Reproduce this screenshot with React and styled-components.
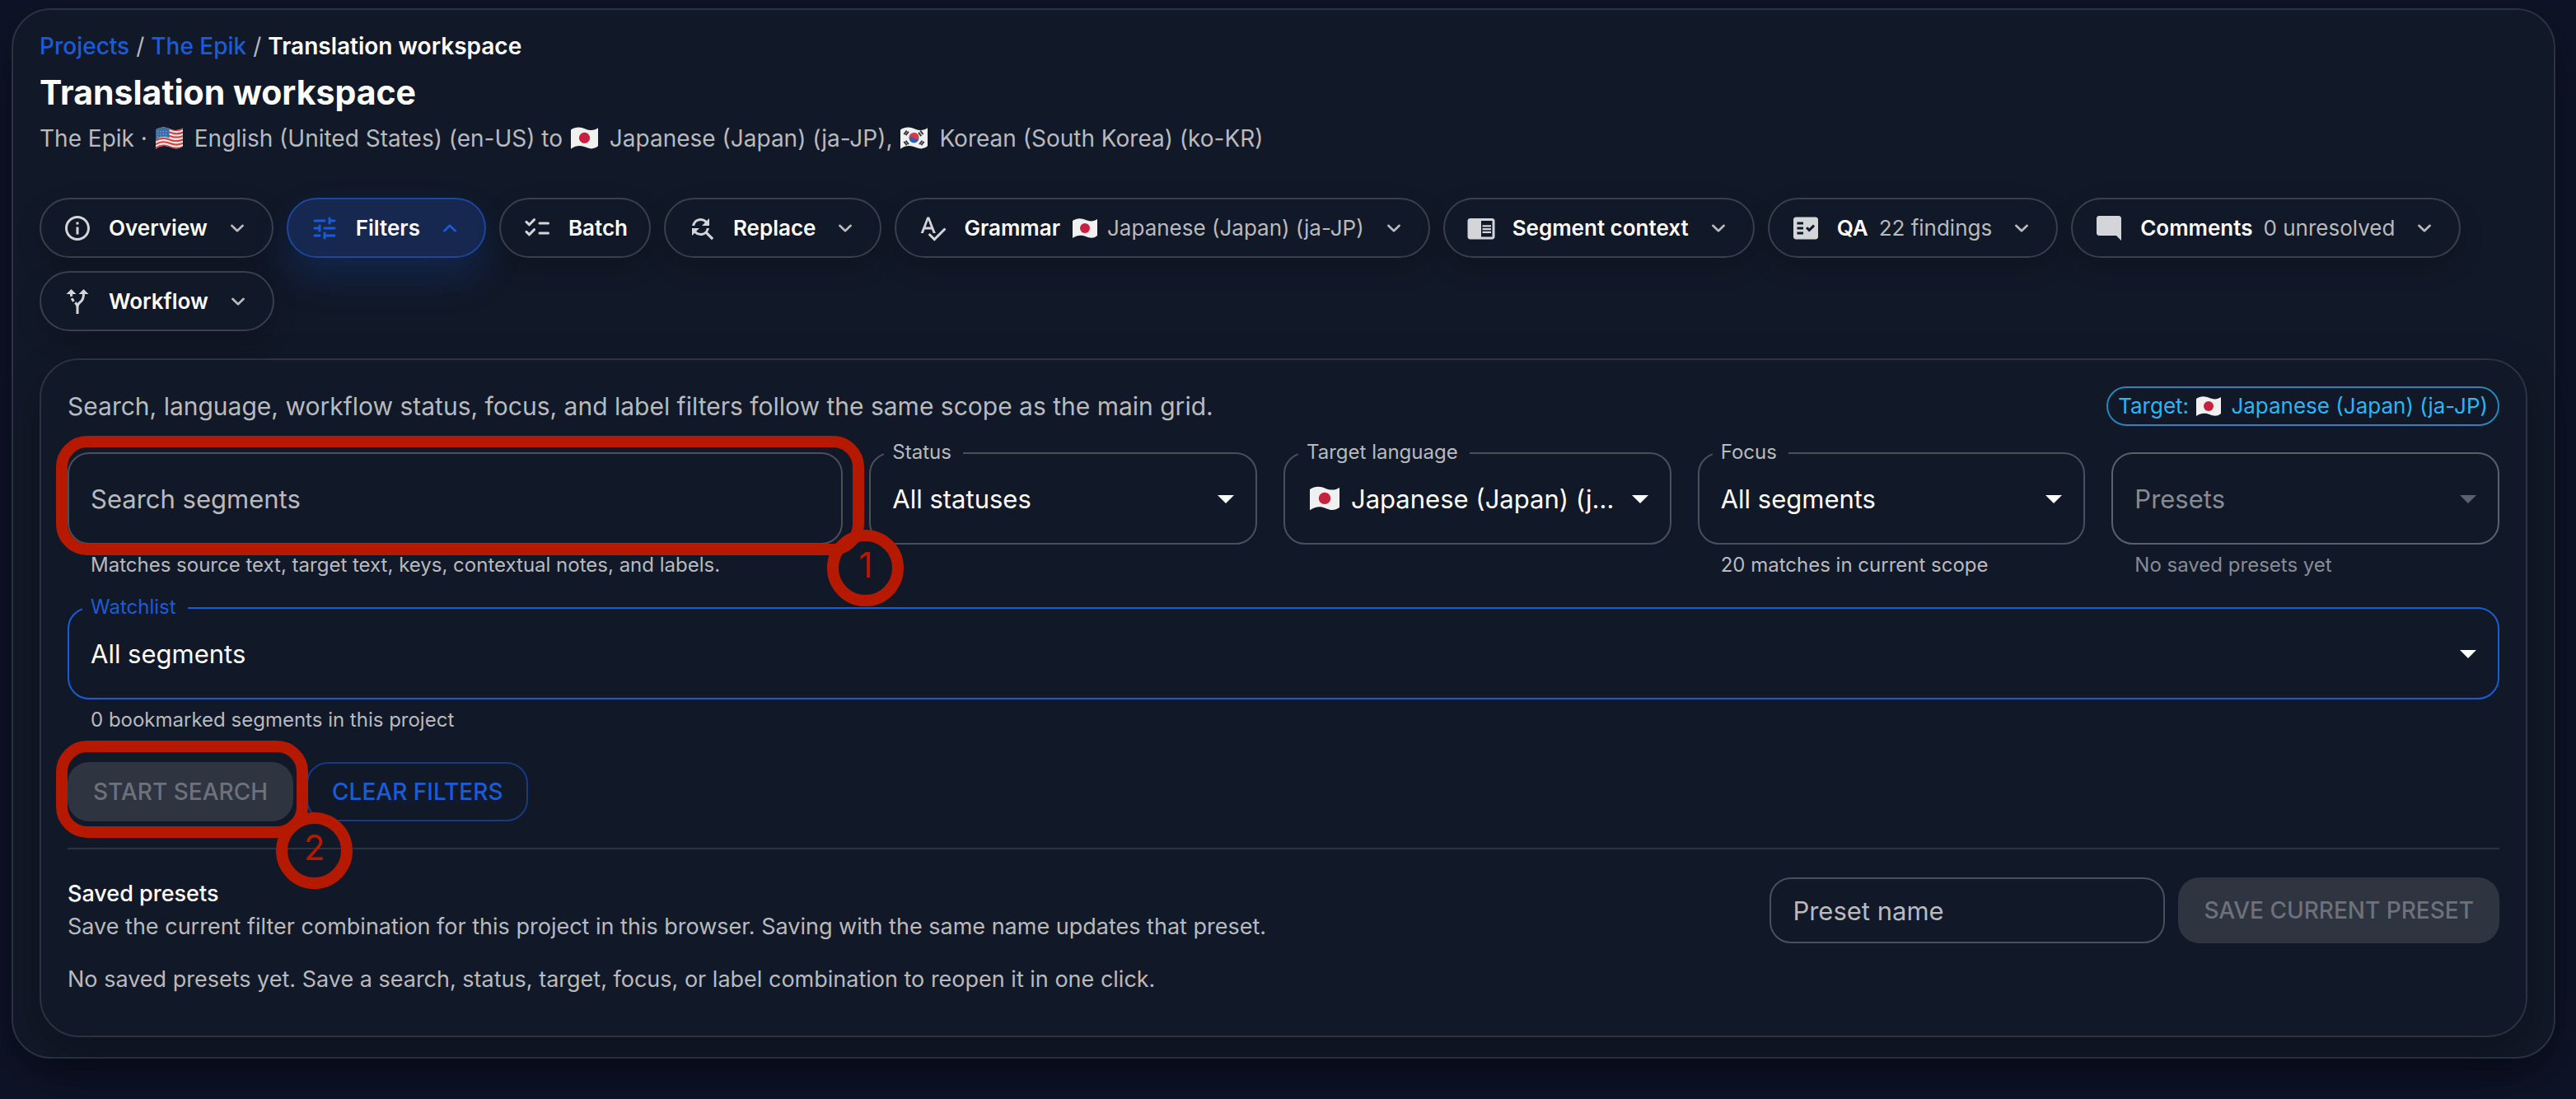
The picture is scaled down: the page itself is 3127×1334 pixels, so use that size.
import React, {useState} from 'react';
import styled, {createGlobalStyle, css} from 'styled-components';
import {
    MdInfoOutline, MdFindReplace, MdSpellcheck, MdChromeReaderMode,
    MdFactCheck, MdModeComment, MdAltRoute, MdArrowDropDown
} from 'react-icons/md';

const color = {
    paper: '#111827',
    blue: '#1a5cd6',
    sky: '#29b6f6',
    white: '#ffffff',
    muted: '#b8babe',
    icon: '#d3d5d9',
    faint: '#888b93',
    disabled: '#6d717b',
    line: '#2c323f',
    field: '#4a4f5a',
    fill: '#2e3440',
    red: '#b51a00',
};

const GlobalStyle = createGlobalStyle`
    * {
        box-sizing: border-box;
    }
    body {
        margin: 0;
        min-height: 100vh;
        background: #0e1327;
        color: ${color.white};
        font-family: Inter, "Liberation Sans", sans-serif;
        font-size: 28px;
        line-height: 40px;
    }
    button, input, select {
        font-family: inherit;
    }
`;

const Page = styled.div`
    padding: 10px 25px 48px 14px;
`;

const Card = styled.main`
    padding: 26px 32px 24px;
    background: ${color.paper};
    border: 2px solid ${color.line};
    border-radius: 48px;
    box-shadow: 0 20px 52px rgba(0, 0, 0, 0.36);
`;

const Crumbs = styled.nav`
    display: flex;
    gap: 8px;
    line-height: 36px;
    color: ${color.muted};
`;

const CrumbLink = styled.a`
    color: ${color.blue};
    font-weight: 500;
    text-decoration: none;
`;

const CrumbHere = styled.span`
    color: ${color.white};
    font-weight: 600;
`;

const Title = styled.h1`
    margin: 12px 0 10px;
    font-size: 41px;
    line-height: 52px;
    font-weight: 700;
`;

const Subtitle = styled.p`
    margin: 0;
    color: ${color.muted};
`;

const FlagSvg = styled.svg`
    display: inline-block;
    width: ${(p) => p.$width}px;
    height: ${(p) => p.$width - 3}px;
    margin: 0 ${(p) => (p.$width > 30 ? 14 : 12)}px 0 2px;
    vertical-align: -5px;
`;

const Toolbar = styled.div`
    display: flex;
    flex-wrap: wrap;
    gap: 16px;
    margin: 52px 0 33px;
`;

const ToolButton = styled.button`
    display: flex;
    align-items: center;
    gap: 20px;
    height: 73px;
    padding: 0 26px;
    background: ${color.paper};
    border: 2px solid #3a3f4b;
    border-radius: 37px;
    box-shadow: 0 12px 32px rgba(0, 0, 0, 0.16);
    color: ${color.white};
    font-size: 26px;
    font-weight: 600;
    white-space: nowrap;
    cursor: pointer;

    > svg {
        color: ${color.icon};
    }
    > svg:last-child {
        color: ${color.muted};
    }
    ${(p) => p.$active && css`
        background: #162750;
        border-color: #1b479d;
        box-shadow: 0 24px 48px rgba(26, 92, 214, 0.2);

        > svg, > svg:last-child {
            color: ${color.blue};
        }
    `}
`;

const ToolText = styled.span`
    display: flex;
    align-items: center;
    gap: 13px;
`;

const ToolNote = styled.span`
    color: ${color.muted};
    font-weight: 400;
`;

const Panel = styled.section`
    padding: 32px 32px 48px;
    background: ${color.paper};
    border: 2px solid ${color.line};
    border-radius: 48px;
    box-shadow: 0 16px 48px rgba(0, 0, 0, 0.24);
`;

const PanelHead = styled.div`
    display: flex;
    justify-content: space-between;
    align-items: center;
    margin-bottom: 32px;
    color: ${color.muted};
    font-size: 30px;
    line-height: 48px;
`;

const Chip = styled.span`
    height: 48px;
    padding: 0 12px;
    border: 2px solid #2387bb;
    border-radius: 24px;
    color: ${color.sky};
    font-size: 26px;
    line-height: 44px;
`;

const Fields = styled.div`
    display: grid;
    grid-template-columns: 2fr repeat(4, 1fr);
    gap: 32px;
`;

const FieldCell = styled.div`
    min-width: 0;
    ${(p) => p.$wide && 'grid-column: 1 / -1;'}
`;

const FieldBox = styled.div`
    position: relative;
    display: flex;
    align-items: center;
    height: 112px;
    border: 2px solid ${(p) => (p.$focused ? color.blue : p.$off ? '#5b606a' : color.field)};
    border-radius: 26px;
    color: ${(p) => (p.$off ? '#5b606a' : color.white)};
`;

const FieldLabel = styled.label`
    position: absolute;
    top: -18px;
    left: 16px;
    padding: 0 14px 0 10px;
    background: ${color.paper};
    color: ${(p) => (p.$focused ? color.blue : color.muted)};
    font-size: 24px;
    line-height: 32px;
`;

const ValueFlag = styled.span`
    display: flex;
    padding-left: 28px;
    margin-right: -26px;
`;

const Select = styled.select`
    flex: 1;
    min-width: 0;
    height: 100%;
    padding: 0 64px 0 26px;
    background: transparent;
    border: 0;
    outline: 0;
    appearance: none;
    color: ${(p) => (p.disabled ? color.faint : color.white)};
    opacity: 1;
    font-size: 31px;
    text-overflow: ellipsis;
`;

const DropArrow = styled(MdArrowDropDown)`
    position: absolute;
    right: 12px;
    width: 48px;
    height: 48px;
    pointer-events: none;
`;

const Input = styled.input`
    width: 100%;
    height: 100%;
    padding: 0 26px;
    background: transparent;
    border: 0;
    outline: 0;
    color: ${color.white};
    font-size: 31px;

    &::placeholder {
        color: ${color.muted};
        opacity: 1;
    }
`;

const Helper = styled.p`
    margin: 6px 28px 0;
    color: ${(p) => (p.$off ? color.faint : color.muted)};
    font-size: 24px;
    line-height: 38px;
`;

const Marker = styled.div`
    position: absolute;
    z-index: 1;
    inset: ${(p) => p.$inset};
    border: 14px solid ${color.red};
    border-radius: 38px;
    pointer-events: none;
`;

const MarkerNumber = styled.span`
    position: absolute;
    right: ${(p) => p.$right}px;
    bottom: -76px;
    width: 93px;
    height: 93px;
    border: 14px solid ${color.red};
    border-radius: 50%;
    color: ${color.red};
    font-size: 42px;
    font-weight: 400;
    line-height: 58px;
    text-align: center;
`;

const Actions = styled.div`
    display: flex;
    gap: 16px;
    margin: 32px 0;
`;

const ActionSlot = styled.div`
    position: relative;
`;

const Action = styled.button`
    height: ${(p) => (p.$tall ? 80 : 72)}px;
    padding: 0 ${(p) => (p.$outlined ? 29 : 31)}px;
    background: ${(p) => (p.$outlined ? 'transparent' : color.fill)};
    border: ${(p) => (p.$outlined ? '2px solid #173a80' : '0')};
    border-radius: 26px;
    color: ${(p) => (p.$outlined ? color.blue : color.disabled)};
    font-size: 28px;
    font-weight: 500;
    text-transform: uppercase;
    white-space: nowrap;
`;

const Saved = styled.div`
    display: flex;
    justify-content: space-between;
    align-items: center;
    gap: 16px;
    padding-top: 34px;
    border-top: 2px solid ${color.line};
`;

const SavedTitle = styled.h2`
    margin: 0;
    font-size: 27px;
    line-height: 40px;
    font-weight: 500;
`;

const Text = styled.p`
    margin: ${(p) => (p.$spaced ? '24px 0 0' : '0')};
    color: ${color.muted};
    font-size: 27px;
    line-height: 40px;
`;

const PresetForm = styled.div`
    display: flex;
    gap: 16px;
`;

const PresetBox = styled.div`
    width: 480px;
    height: 80px;
    border: 2px solid ${color.field};
    border-radius: 26px;
`;

// rounded line icons, drawn on a 24 unit grid
const LineIcon = ({size, d}) => (
    <svg width={size} height={size} viewBox="0 0 24 24" fill="none" stroke="currentColor" strokeWidth="2"
         strokeLinecap="round" strokeLinejoin="round" aria-hidden="true">
        <path d={d}/>
    </svg>
);

const TuneIcon = ({size}) => (
    <LineIcon size={size} d="M4 6h8M16 6h4M16 4v4M4 12h4M8 10v4M12 12h8M4 18h4M12 18h8M12 16v4"/>
);

const ChecklistIcon = ({size}) => (
    <LineIcon size={size} d="M14 8h7M14 16h7M3.3 6.9l2.4 2.3 4-4.1M3.3 14.9l2.4 2.3 4-4.1"/>
);

const ExpandMoreIcon = () => <LineIcon size={32} d="M7 9.6l5 4.8 5-4.8"/>;

const ExpandLessIcon = () => <LineIcon size={32} d="M7 14.4l5-4.8 5 4.8"/>;

const WAVE = 'M2 4 C8 0 13 1 18 3 C23 5 28 5 32 2 L32 22 C27 26 23 25 18 23 C13 21 8 21 2 25 Z';

const Flag = ({country, width = 30}) => (
    <FlagSvg $width={width} viewBox="2 0 30 27" role="img" aria-label={country}>
        <defs>
            <clipPath id={`flag-${country}`}>
                <path d={WAVE}/>
            </clipPath>
        </defs>
        <path d={WAVE} fill="#f0f0f1"/>
        <g clipPath={`url(#flag-${country})`}>
            {country === 'US' && (
                <>
                    {[2, 6, 10, 14, 18, 22].map((y) => (
                        <path key={y} d={`M0 ${y + 3} C8 ${y - 2} 13 ${y - 1} 18 ${y + 1} C23 ${y + 3} 28 ${y + 3} 34 ${y}`}
                              fill="none" stroke="#d8413f" strokeWidth="2"/>
                    ))}
                    <path d="M2 2 C8 0 13 0 17 2 L17 13 C12 11 8 11 2 15 Z" fill="#3a6ea8"/>
                    <path d="M4 6h11M4 9h11M4 12h11" stroke="#a9c3df" strokeWidth="1" strokeDasharray="1 2"/>
                </>
            )}
            {country === 'JP' && <circle cx="17" cy="13" r="6" fill="#c8203f"/>}
            {country === 'KR' && (
                <>
                    <circle cx="17" cy="13" r="5.4" fill="#2f5fae"/>
                    <path d="M11.6 13 A5.4 5.4 0 0 1 22.4 12 C21 16 18 14 17 13 C15 11 12 12 11.6 13 Z" fill="#d63a46"/>
                    <path d="M6 9l3-4M8 10l3-4M24 5l3 4M22 7l3 4M6 17l3 4M8 16l3 4M25 21l3-4M23 20l3-4"
                          stroke="#33363b" strokeWidth="1.8"/>
                </>
            )}
        </g>
    </FlagSvg>
);

const TOOLS = [
    {name: 'Overview', Icon: MdInfoOutline},
    {name: 'Filters', Icon: TuneIcon},
    {name: 'Batch', Icon: ChecklistIcon, plain: true},
    {name: 'Replace', Icon: MdFindReplace},
    {name: 'Grammar', Icon: MdSpellcheck, flag: 'JP', note: 'Japanese (Japan) (ja-JP)'},
    {name: 'Segment context', Icon: MdChromeReaderMode},
    {name: 'QA', Icon: MdFactCheck, note: '22 findings'},
    {name: 'Comments', Icon: MdModeComment, note: '0 unresolved'},
    {name: 'Workflow', Icon: MdAltRoute},
];

const SelectField = ({id, label, value, helper, flag, focused, wide}) => (
    <FieldCell $wide={wide}>
        <FieldBox $focused={focused}>
            <FieldLabel htmlFor={id} $focused={focused}>{label}</FieldLabel>
            {flag && <ValueFlag><Flag country={flag} width={36}/></ValueFlag>}
            <Select id={id} defaultValue={value}>
                <option>{value}</option>
            </Select>
            <DropArrow/>
        </FieldBox>
        {helper && <Helper>{helper}</Helper>}
    </FieldCell>
);

const App = () => {
    const [open, setOpen] = useState('Filters');
    const [search, setSearch] = useState('');
    const [preset, setPreset] = useState('');

    const onClickTool = (name) => {
        setOpen(open === name ? '' : name);
    };

    return (
        <Page>
            <GlobalStyle/>
            <Card>
                <Crumbs aria-label="Breadcrumb">
                    <CrumbLink href="#projects">Projects</CrumbLink>
                    <span>/</span>
                    <CrumbLink href="#epik">The Epik</CrumbLink>
                    <span>/</span>
                    <CrumbHere>Translation workspace</CrumbHere>
                </Crumbs>
                <Title>Translation workspace</Title>
                <Subtitle>
                    The Epik · <Flag country="US" width={33}/>English (United States) (en-US) to <Flag country="JP" width={33}/>Japanese
                    (Japan) (ja-JP), <Flag country="KR" width={33}/>Korean (South Korea) (ko-KR)
                </Subtitle>

                <Toolbar>
                    {TOOLS.map(({name, Icon, note, flag, plain}) => (
                        <ToolButton key={name} type="button" $active={open === name} onClick={() => onClickTool(name)}>
                            <Icon size={36}/>
                            <ToolText>
                                {name}
                                {note && <ToolNote>{flag && <Flag country={flag}/>}{note}</ToolNote>}
                            </ToolText>
                            {!plain && (open === name ? <ExpandLessIcon/> : <ExpandMoreIcon/>)}
                        </ToolButton>
                    ))}
                </Toolbar>

                <Panel>
                    <PanelHead>
                        <span>Search, language, workflow status, focus, and label filters follow the same scope as the main grid.</span>
                        <Chip>Target: <Flag country="JP"/>Japanese (Japan) (ja-JP)</Chip>
                    </PanelHead>

                    <Fields>
                        <FieldCell>
                            <FieldBox>
                                <Input aria-label="Search segments" placeholder="Search segments" value={search}
                                       onChange={(e) => setSearch(e.target.value)}/>
                                <Marker $inset="-22px -28px -15px -16px">
                                    <MarkerNumber $right={-62}>1</MarkerNumber>
                                </Marker>
                            </FieldBox>
                            <Helper>Matches source text, target text, keys, contextual notes, and labels.</Helper>
                        </FieldCell>
                        <SelectField id="status" label="Status" value="All statuses"/>
                        <SelectField id="target" label="Target language" value="Japanese (Japan) (ja-JP)" flag="JP"/>
                        <SelectField id="focus" label="Focus" value="All segments" helper="20 matches in current scope"/>
                        <FieldCell>
                            <FieldBox $off>
                                <Select aria-label="Presets" disabled defaultValue="Presets">
                                    <option>Presets</option>
                                </Select>
                                <DropArrow/>
                            </FieldBox>
                            <Helper $off>No saved presets yet</Helper>
                        </FieldCell>
                        <SelectField id="watchlist" label="Watchlist" value="All segments" focused wide
                                     helper="0 bookmarked segments in this project"/>
                    </Fields>

                    <Actions>
                        <ActionSlot>
                            <Action type="button" disabled>Start search</Action>
                            <Marker $inset="-26px -18px -20px -14px">
                                <MarkerNumber $right={-68}>2</MarkerNumber>
                            </Marker>
                        </ActionSlot>
                        <Action type="button" $outlined>Clear filters</Action>
                    </Actions>

                    <Saved>
                        <div>
                            <SavedTitle>Saved presets</SavedTitle>
                            <Text>Save the current filter combination for this project in this browser. Saving with the same name updates that preset.</Text>
                        </div>
                        <PresetForm>
                            <PresetBox>
                                <Input aria-label="Preset name" placeholder="Preset name" value={preset}
                                       onChange={(e) => setPreset(e.target.value)}/>
                            </PresetBox>
                            <Action type="button" $tall disabled>Save current preset</Action>
                        </PresetForm>
                    </Saved>
                    <Text $spaced>No saved presets yet. Save a search, status, target, focus, or label combination to reopen it in one click.</Text>
                </Panel>
            </Card>
        </Page>
    );
};

export default App;
